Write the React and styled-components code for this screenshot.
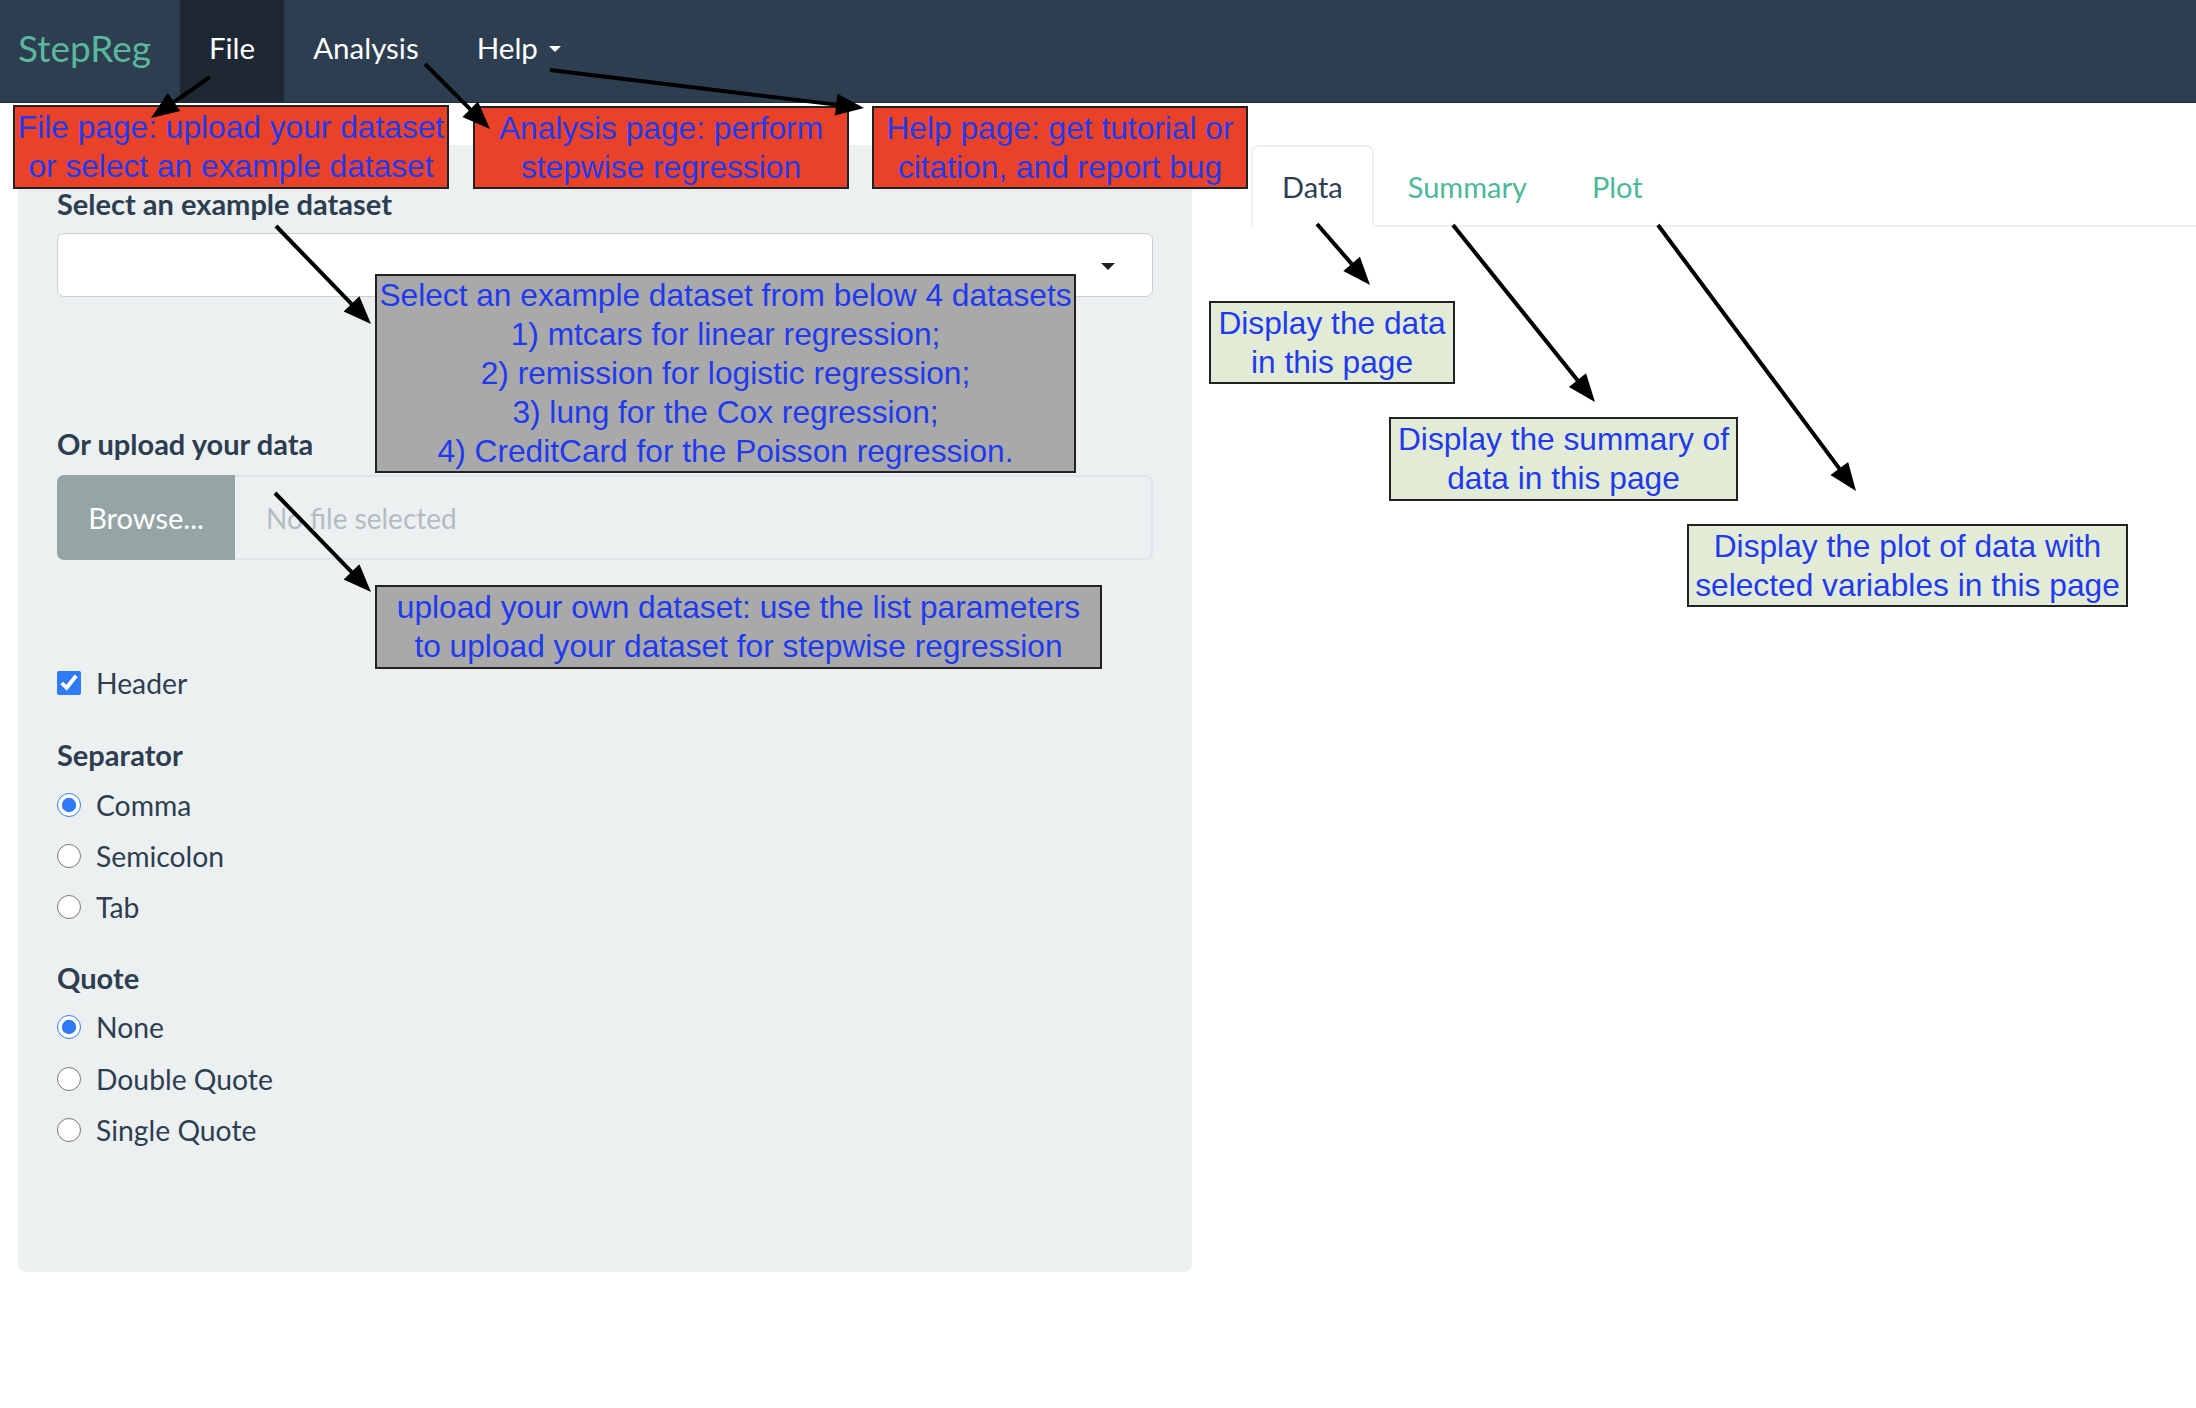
import React from 'react';
import styled, { createGlobalStyle, css } from 'styled-components';

const GlobalStyle = createGlobalStyle`
  body {
    margin: 0;
    background: #ffffff;
    font-family: Lato, "Open Sans", "Liberation Sans", sans-serif;
    color: #2c3e50;
  }
`;

// Page
const Page = styled.div`
  position: relative;
  width: 2196px;
  min-height: 1408px;
  overflow: hidden;
`;

const Navbar = styled.nav`
  height: 102px;
  display: flex;
  align-items: stretch;
  background: #2c3e50;
  border-bottom: 1px solid #1f2d3b;
`;

const Brand = styled.div`
  display: flex;
  align-items: center;
  padding: 0 29px 8px 18px;
  font-size: 37px;
  color: #5ab89c;
`;

const NavItem = styled.div`
  display: flex;
  align-items: center;
  gap: 11px;
  padding: 0 29px 8px;
  font-size: 29.5px;
  color: #ffffff;
  background: ${(p) => (p.$active ? '#1e2833' : 'transparent')};
`;

const Caret = styled.span`
  width: 0;
  height: 0;
  margin-top: 3px;
  border-left: ${(p) => p.$size}px solid transparent;
  border-right: ${(p) => p.$size}px solid transparent;
  border-top: ${(p) => p.$size}px solid ${(p) => p.$color};
`;

const Body = styled.div`
  display: flex;
  align-items: flex-start;
  padding: 42px 0 0 18px;
`;

// Sidebar
const Well = styled.div`
  width: 1174px;
  box-sizing: border-box;
  padding: 41px 39px 124px;
  background: #ecf0f1;
  border-radius: 8px;
  display: flex;
  flex-direction: column;
`;

const Label = styled.div`
  font-size: 29px;
  font-weight: 700;
  line-height: 36px;
  margin-top: ${(p) => p.$mt || 0}px;
  margin-bottom: ${(p) => p.$mb || 0}px;
`;

const SelectBox = styled.div`
  height: 64px;
  box-sizing: border-box;
  display: flex;
  align-items: center;
  justify-content: flex-end;
  padding-right: 37px;
  background: #ffffff;
  border: 1px solid #c9d0d4;
  border-radius: 7px;
`;

const FileRow = styled.div`
  display: flex;
  height: 85px;
`;

const BrowseButton = styled.div`
  width: 178px;
  display: flex;
  align-items: center;
  justify-content: center;
  background: #95a5a6;
  color: #ffffff;
  font-size: 29px;
  border-radius: 7px 0 0 7px;
`;

const FileField = styled.div`
  flex: 1;
  display: flex;
  align-items: center;
  padding-left: 31px;
  border: 2px solid #dce4ec;
  border-left: none;
  border-radius: 0 7px 7px 0;
  font-size: 28px;
  color: #b3bcc3;
`;

const OptionRow = styled.label`
  display: flex;
  align-items: center;
  gap: 15px;
  height: 36px;
  font-size: 28.3px;
  margin-top: ${(p) => p.$mt || 0}px;

  input {
    width: 24px;
    height: 24px;
    margin: 0;
    accent-color: #2f7bf5;
  }
`;

// Main
const Main = styled.div`
  flex: 1;
  margin-left: 59px;
`;

const Tabs = styled.div`
  display: flex;
  border-bottom: 2px solid #ecf0f1;
`;

const Tab = styled.div`
  height: 82px;
  box-sizing: border-box;
  display: flex;
  align-items: center;
  padding: 0 29px;
  margin-right: 3px;
  margin-bottom: -2px;
  font-size: 29px;
  border: 2px solid transparent;
  border-radius: 7px 7px 0 0;
  color: #4cb89a;

  ${(p) =>
    p.$active &&
    css`
      color: #2c3e50;
      background: #ffffff;
      border-color: #ecf0f1;
      border-bottom-color: #ffffff;
    `}
`;

// Annotations
const noteColors = {
  red: '#ea4229',
  gray: '#a9a9a9',
  green: '#e2ebd5',
};

const Note = styled.div`
  position: absolute;
  left: ${(p) => p.$x}px;
  top: ${(p) => p.$y}px;
  width: ${(p) => p.$w}px;
  height: ${(p) => p.$h}px;
  box-sizing: border-box;
  display: flex;
  align-items: center;
  justify-content: center;
  text-align: center;
  background: ${(p) => noteColors[p.$tone]};
  border: 2px solid #222;
  font-family: "Liberation Sans", Arial, sans-serif;
  font-size: 31.7px;
  line-height: 39px;
  color: #1f3af0;
  white-space: nowrap;
`;

const ArrowLayer = styled.svg`
  position: absolute;
  left: 0;
  top: 0;
  pointer-events: none;
`;

const notes = [
  { tone: 'red', x: 13, y: 105, w: 436, h: 84, lines: ['File page: upload your dataset', 'or select an example dataset'] },
  { tone: 'red', x: 473, y: 106, w: 376, h: 83, lines: ['Analysis page: perform', 'stepwise regression'] },
  { tone: 'red', x: 872, y: 106, w: 376, h: 83, lines: ['Help page: get tutorial or', 'citation, and report bug'] },
  {
    tone: 'gray', x: 375, y: 274, w: 701, h: 199,
    lines: [
      'Select an example dataset from below 4 datasets',
      '1) mtcars for linear regression;',
      '2) remission for logistic regression;',
      '3) lung for the Cox regression;',
      '4) CreditCard for the Poisson regression.',
    ],
  },
  { tone: 'gray', x: 375, y: 585, w: 727, h: 84, lines: ['upload your own dataset: use the list parameters', 'to upload your dataset for stepwise regression'] },
  { tone: 'green', x: 1209, y: 301, w: 246, h: 83, lines: ['Display the data', 'in this page'] },
  { tone: 'green', x: 1389, y: 417, w: 349, h: 84, lines: ['Display the summary of', 'data in this page'] },
  { tone: 'green', x: 1687, y: 524, w: 441, h: 83, lines: ['Display the plot of data with', 'selected variables in this page'] },
];

const arrows = [
  [210, 77, 151, 118],
  [425, 64, 490, 129],
  [550, 70, 864, 108],
  [276, 226, 371, 324],
  [275, 493, 371, 592],
  [1317, 224, 1370, 285],
  [1453, 225, 1595, 402],
  [1658, 225, 1856, 491],
];

const Arrow = ({ x1, y1, x2, y2 }) => {
  const len = Math.hypot(x2 - x1, y2 - y1);
  const ux = (x2 - x1) / len;
  const uy = (y2 - y1) / len;
  const bx = x2 - ux * 28;
  const by = y2 - uy * 28;
  const nx = -uy * 11;
  const ny = ux * 11;
  return (
    <g>
      <line x1={x1} y1={y1} x2={bx + ux * 2} y2={by + uy * 2} stroke="#000" strokeWidth="4" />
      <polygon points={`${x2},${y2} ${bx + nx},${by + ny} ${bx - nx},${by - ny}`} fill="#000" />
    </g>
  );
};

const App = () => (
  <Page>
    <GlobalStyle />
    <Navbar>
      <Brand>StepReg</Brand>
      <NavItem $active>File</NavItem>
      <NavItem>Analysis</NavItem>
      <NavItem>
        Help
        <Caret $size={6} $color="#ffffff" />
      </NavItem>
    </Navbar>

    <Body>
      <Well>
        <Label $mb={11}>Select an example dataset</Label>
        <SelectBox>
          <Caret $size={7} $color="#222" />
        </SelectBox>

        <Label $mt={129} $mb={13}>Or upload your data</Label>
        <FileRow>
          <BrowseButton>Browse...</BrowseButton>
          <FileField>No file selected</FileField>
        </FileRow>

        <OptionRow $mt={105}>
          <input type="checkbox" defaultChecked />
          Header
        </OptionRow>

        <Label $mt={36}>Separator</Label>
        <OptionRow $mt={14}>
          <input type="radio" name="sep" defaultChecked />
          Comma
        </OptionRow>
        <OptionRow $mt={15}>
          <input type="radio" name="sep" />
          Semicolon
        </OptionRow>
        <OptionRow $mt={15}>
          <input type="radio" name="sep" />
          Tab
        </OptionRow>

        <Label $mt={35}>Quote</Label>
        <OptionRow $mt={13}>
          <input type="radio" name="quote" defaultChecked />
          None
        </OptionRow>
        <OptionRow $mt={16}>
          <input type="radio" name="quote" />
          Double Quote
        </OptionRow>
        <OptionRow $mt={15}>
          <input type="radio" name="quote" />
          Single Quote
        </OptionRow>
      </Well>

      <Main>
        <Tabs>
          <Tab $active>Data</Tab>
          <Tab>Summary</Tab>
          <Tab>Plot</Tab>
        </Tabs>
      </Main>
    </Body>

    {notes.map((n) => (
      <Note key={n.lines[0]} $tone={n.tone} $x={n.x} $y={n.y} $w={n.w} $h={n.h}>
        <div>
          {n.lines.map((line) => (
            <div key={line}>{line}</div>
          ))}
        </div>
      </Note>
    ))}

    <ArrowLayer width="2196" height="1408">
      {arrows.map(([x1, y1, x2, y2]) => (
        <Arrow key={`${x1}-${y1}`} x1={x1} y1={y1} x2={x2} y2={y2} />
      ))}
    </ArrowLayer>
  </Page>
);

export default App;
